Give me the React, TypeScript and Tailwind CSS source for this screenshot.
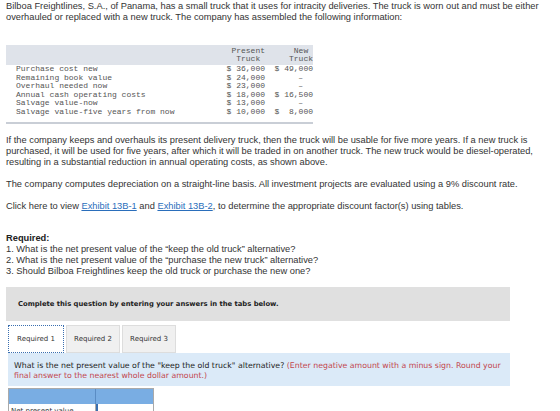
const rows = [
  { label: 'Purchase cost new', present: '$ 36,000', next: '$ 49,000' },
  { label: 'Remaining book value', present: '$ 24,000', next: '–' },
  { label: 'Overhaul needed now', present: '$ 23,000', next: '–' },
  { label: 'Annual cash operating costs', present: '$ 18,000', next: '$ 16,500' },
  { label: 'Salvage value-now', present: '$ 13,000', next: '–' },
  { label: 'Salvage value-five years from now', present: '$ 10,000', next: '$  8,000' },
]

const TruckTable = () => (
  <div className="mt-[22px] w-[307px] border-b-2 border-[#c9ced6] pb-[6px] font-['Liberation_Mono',monospace] text-[8px] text-[#555]">
    <div className="flex h-[20px] items-center bg-[#dfe3ea] leading-[8.5px]">
      <div className="flex-1" />
      <div className="flex w-[42px] justify-end">
        <div className="text-center">Present<br />Truck</div>
      </div>
      <div className="flex w-[48px] justify-end">
        <div className="text-center">New<br />Truck</div>
      </div>
    </div>
    {rows.map((row) => (
      <div key={row.label} className="flex h-[8.5px] items-center leading-[8.5px]">
        <div className="flex-1 pl-[10px]">{row.label}</div>
        <div className="w-[42px] whitespace-pre text-right">{row.present}</div>
        <div className={row.next === '–' ? 'w-[48px] pr-[10px] text-right' : 'w-[48px] whitespace-pre text-right'}>
          {row.next}
        </div>
      </div>
    ))}
  </div>
)

const tabs = ['Required 1', 'Required 2', 'Required 3']

export default function App() {
  return (
    <div className="h-[411px] w-[560px] overflow-hidden bg-white px-[6px] pt-[1px] font-['Liberation_Sans',Arial,sans-serif] text-[9.3px] leading-[11px] text-[#333]">
      <p>
        Bilboa Freightlines, S.A., of Panama, has a small truck that it uses for intracity deliveries. The truck is worn out and must be either
        overhauled or replaced with a new truck. The company has assembled the following information:
      </p>

      <TruckTable />

      <p className="mt-[11px]">
        If the company keeps and overhauls its present delivery truck, then the truck will be usable for five more years. If a new truck is
        purchased, it will be used for five years, after which it will be traded in on another truck. The new truck would be diesel-operated,
        resulting in a substantial reduction in annual operating costs, as shown above.
      </p>
      <p className="mt-[11px]">
        The company computes depreciation on a straight-line basis. All investment projects are evaluated using a 9% discount rate.
      </p>
      <p className="mt-[11px]">
        Click here to view <span className="text-[#2a6ebb] underline">Exhibit 13B-1</span> and{' '}
        <span className="text-[#2a6ebb] underline">Exhibit 13B-2</span>, to determine the appropriate discount factor(s) using tables.
      </p>

      <div className="mt-[21px]">
        <p className="font-bold text-[#222]">Required:</p>
        <p>1. What is the net present value of the “keep the old truck” alternative?</p>
        <p>2. What is the net present value of the “purchase the new truck” alternative?</p>
        <p>3. Should Bilboa Freightlines keep the old truck or purchase the new one?</p>
      </div>

      <div className="mt-[10px] w-[504px] font-['DejaVu_Sans',Verdana,sans-serif]">
        <div className="flex h-[34px] items-center bg-[#e0e0e0] px-[12px] text-[6.8px] font-bold text-[#222]">
          Complete this question by entering your answers in the tabs below.
        </div>

        <div className="mt-[4px] flex gap-[2px] pl-[2px] text-[7px] text-[#333]">
          {tabs.map((tab, i) => (
            <div
              key={tab}
              className={
                i === 0
                  ? 'flex h-[28px] w-[56px] items-center justify-center border border-dotted border-[#3a6fb0] bg-white'
                  : 'flex h-[28px] w-[54px] items-center justify-center border border-[#ddd] bg-[#f0f0f0]'
              }
            >
              {tab}
            </div>
          ))}
        </div>

        <div className="ml-[2px] bg-[#dbeaf8] px-[6px] pb-[5px] pt-[8px] text-[7.8px] leading-[10px] text-[#222]">
          What is the net present value of the "keep the old truck" alternative?{' '}
          <span className="text-[#c2454d]">
            (Enter negative amount with a minus sign. Round your final answer to the nearest whole dollar amount.)
          </span>
        </div>

        <div className="ml-[2px] mt-[2px] w-[146px] border border-[#aaa] text-[7px]">
          <div className="flex h-[15px] bg-[#79ade3]">
            <div className="w-[87px] border-r border-[#5a8cc4]" />
            <div className="flex-1" />
          </div>
          <div className="flex h-[14px] bg-white">
            <div className="w-[87px] border-r border-[#aaa] pl-[2px] leading-[14px]">Net present value</div>
            <div className="flex-1 border-l-2 border-[#3a6fb0]" />
          </div>
        </div>
      </div>
    </div>
  )
}
